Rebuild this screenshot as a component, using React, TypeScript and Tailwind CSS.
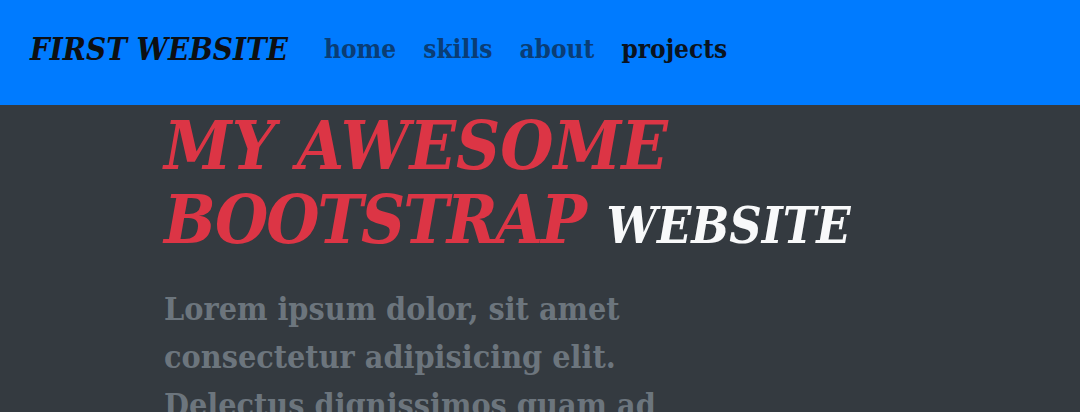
import React from "react";

const slab = { fontFamily: '"DejaVu Serif Condensed", "DejaVu Serif", serif' };

export default function App() {
  return (
    <div className="h-[412px] bg-[#343a40] overflow-hidden" style={slab}>
      <nav className="flex h-[105px] items-center bg-[#007bff] px-[30px] pb-[7px]">
        <a className="mr-[36px] text-[31px] font-bold italic text-[#0d0f12]">
          FIRST WEBSITE
        </a>
        <ul className="flex items-center gap-[27px] text-[26px] font-bold">
          <li className="text-[#0a3d75]">home</li>
          <li className="text-[#0a3d75]">skills</li>
          <li className="text-[#0a3d75]">about</li>
          <li className="text-[#0a1320]">projects</li>
        </ul>
      </nav>

      <section className="pl-[164px] pt-[3px]">
        <h1 className="text-[68px] font-bold italic leading-[74px] text-[#dc3545]">
          MY AWESOME
          <br />
          <span className="tracking-[-2px]">BOOTSTRAP</span>{" "}
          <span className="text-[50px] text-[#f8f9fa]">WEBSITE</span>
        </h1>
        <p className="mt-[22px] text-[32px] font-bold leading-[48px] text-[#6c757d]">
          Lorem ipsum dolor, sit amet
          <br />
          consectetur adipisicing elit.
          <br />
          Delectus dignissimos quam ad
        </p>
      </section>
    </div>
  );
}
